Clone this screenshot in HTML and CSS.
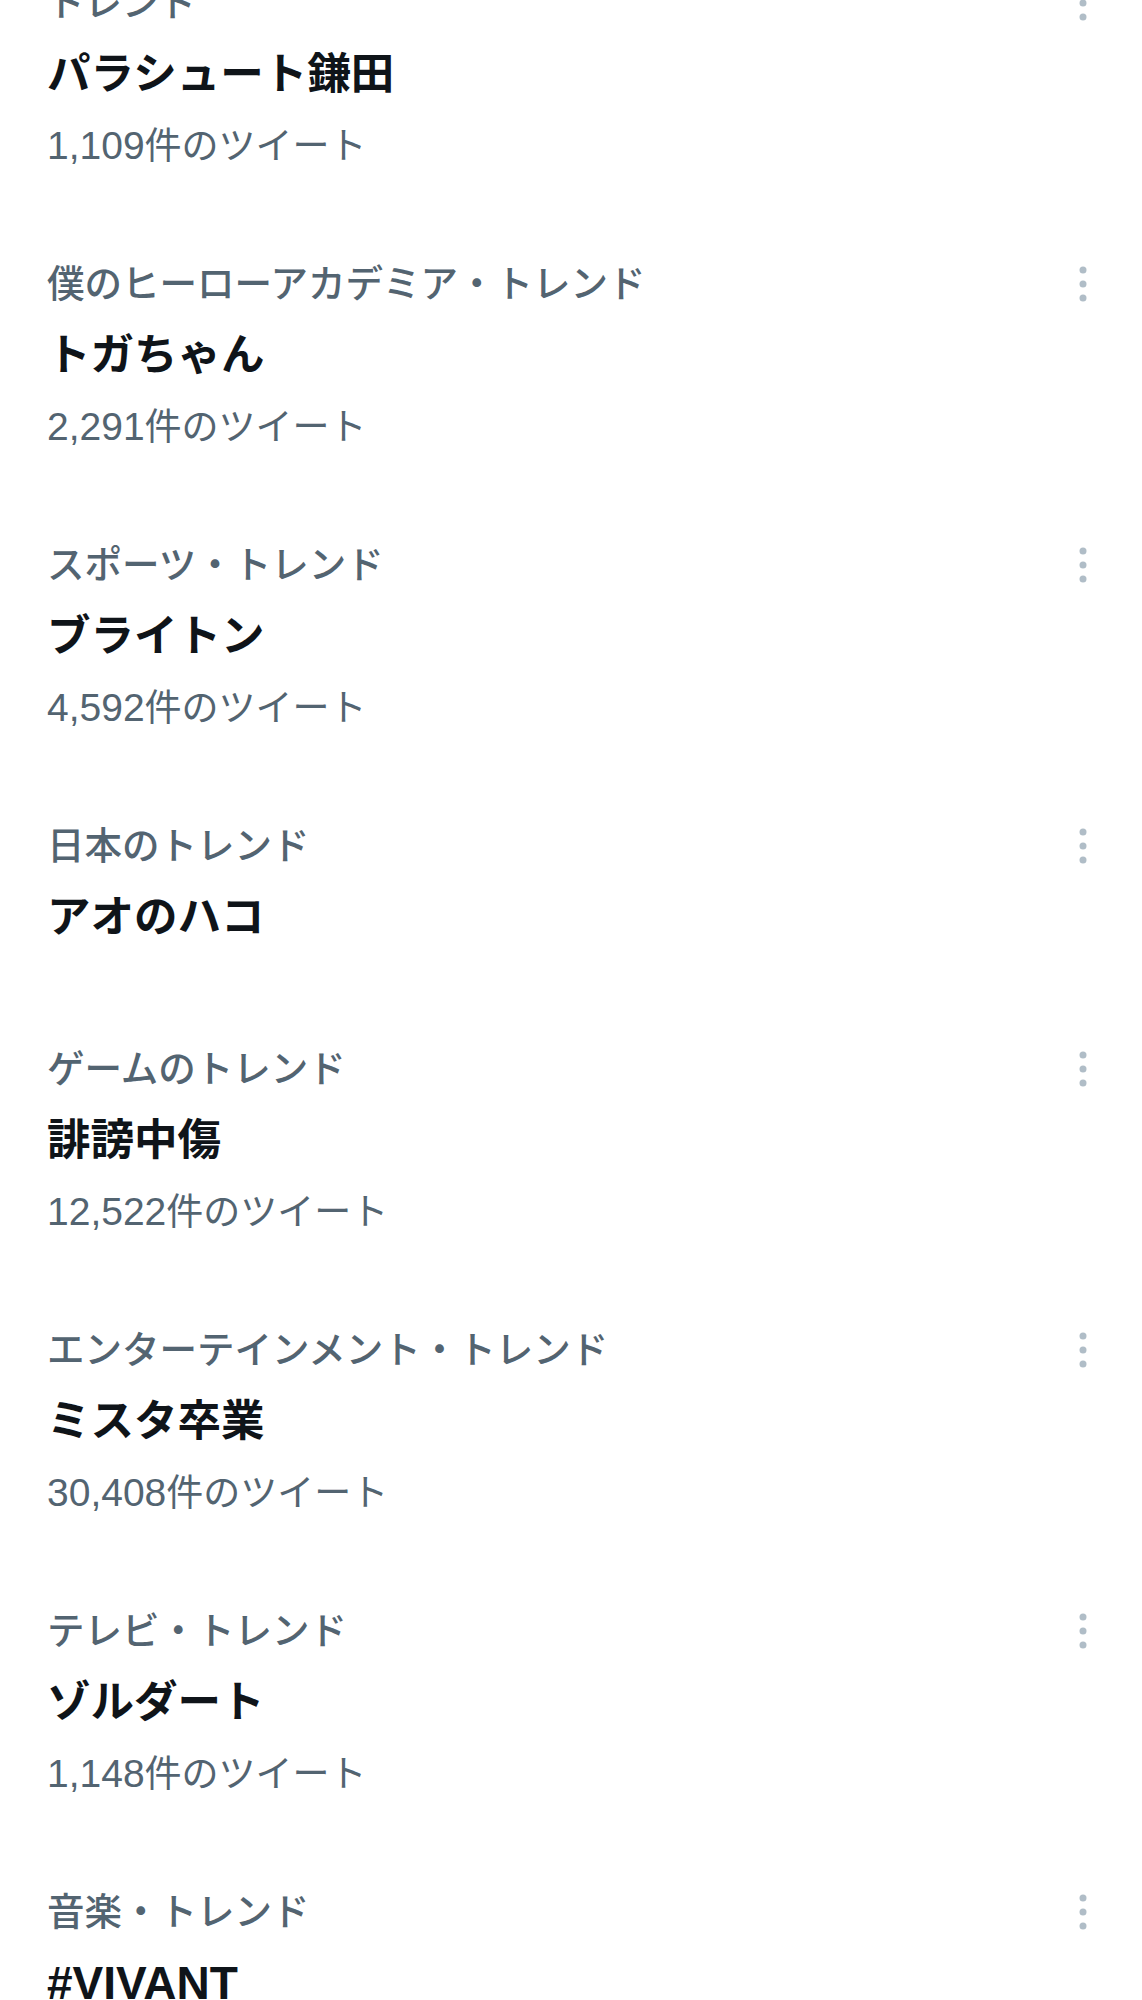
FILE: index.html
```html
<!DOCTYPE html>
<html lang="ja">
<head>
    <meta charset="UTF-8">
    <meta name="viewport" content="width=device-width, initial-scale=1.0">
    <title>トレンド</title>
    <link rel="stylesheet" href="styles.css">
</head>
<body>
    <div class="trends">
        <div class="trend">
            <div class="trend-text">
                <div class="category">トレンド</div>
                <div class="name">パラシュート鎌田</div>
                <div class="count"><span class="num">1,109</span>件のツイート</div>
            </div>
            <button class="more" aria-label="その他">
                <svg width="40" height="48" viewBox="0 0 40 48"><circle cx="20" cy="10" r="3.5"/><circle cx="20" cy="24" r="3.5"/><circle cx="20" cy="38" r="3.5"/></svg>
            </button>
        </div>
        <div class="trend">
            <div class="trend-text">
                <div class="category">僕のヒーローアカデミア・トレンド</div>
                <div class="name">トガちゃん</div>
                <div class="count"><span class="num">2,291</span>件のツイート</div>
            </div>
            <button class="more" aria-label="その他">
                <svg width="40" height="48" viewBox="0 0 40 48"><circle cx="20" cy="10" r="3.5"/><circle cx="20" cy="24" r="3.5"/><circle cx="20" cy="38" r="3.5"/></svg>
            </button>
        </div>
        <div class="trend">
            <div class="trend-text">
                <div class="category">スポーツ・トレンド</div>
                <div class="name">ブライトン</div>
                <div class="count"><span class="num">4,592</span>件のツイート</div>
            </div>
            <button class="more" aria-label="その他">
                <svg width="40" height="48" viewBox="0 0 40 48"><circle cx="20" cy="10" r="3.5"/><circle cx="20" cy="24" r="3.5"/><circle cx="20" cy="38" r="3.5"/></svg>
            </button>
        </div>
        <div class="trend">
            <div class="trend-text">
                <div class="category">日本のトレンド</div>
                <div class="name">アオのハコ</div>
            </div>
            <button class="more" aria-label="その他">
                <svg width="40" height="48" viewBox="0 0 40 48"><circle cx="20" cy="10" r="3.5"/><circle cx="20" cy="24" r="3.5"/><circle cx="20" cy="38" r="3.5"/></svg>
            </button>
        </div>
        <div class="trend">
            <div class="trend-text">
                <div class="category">ゲームのトレンド</div>
                <div class="name">誹謗中傷</div>
                <div class="count"><span class="num">12,522</span>件のツイート</div>
            </div>
            <button class="more" aria-label="その他">
                <svg width="40" height="48" viewBox="0 0 40 48"><circle cx="20" cy="10" r="3.5"/><circle cx="20" cy="24" r="3.5"/><circle cx="20" cy="38" r="3.5"/></svg>
            </button>
        </div>
        <div class="trend">
            <div class="trend-text">
                <div class="category">エンターテインメント・トレンド</div>
                <div class="name">ミスタ卒業</div>
                <div class="count"><span class="num">30,408</span>件のツイート</div>
            </div>
            <button class="more" aria-label="その他">
                <svg width="40" height="48" viewBox="0 0 40 48"><circle cx="20" cy="10" r="3.5"/><circle cx="20" cy="24" r="3.5"/><circle cx="20" cy="38" r="3.5"/></svg>
            </button>
        </div>
        <div class="trend">
            <div class="trend-text">
                <div class="category">テレビ・トレンド</div>
                <div class="name">ゾルダート</div>
                <div class="count"><span class="num">1,148</span>件のツイート</div>
            </div>
            <button class="more" aria-label="その他">
                <svg width="40" height="48" viewBox="0 0 40 48"><circle cx="20" cy="10" r="3.5"/><circle cx="20" cy="24" r="3.5"/><circle cx="20" cy="38" r="3.5"/></svg>
            </button>
        </div>
        <div class="trend">
            <div class="trend-text">
                <div class="category">音楽・トレンド</div>
                <div class="name name-latin">#VIVANT</div>
                <div class="count"><span class="num">2,050</span>件のツイート</div>
            </div>
            <button class="more" aria-label="その他">
                <svg width="40" height="48" viewBox="0 0 40 48"><circle cx="20" cy="10" r="3.5"/><circle cx="20" cy="24" r="3.5"/><circle cx="20" cy="38" r="3.5"/></svg>
            </button>
        </div>
    </div>
</body>
</html>
```

FILE: styles.css
```css
body {
    margin: 0;
    background-color: #ffffff;
    font-family: "Liberation Sans", "Noto Sans CJK JP", sans-serif;
    overflow: hidden;
}
.trends {
    margin-top: -68px;
}
.trend {
    display: flex;
    justify-content: space-between;
    align-items: flex-start;
    padding: 47px 39px 47px 47px;
}
.category {
    color: #536471;
    font-size: 37.5px;
    line-height: 48px;
    height: 48px;
    font-weight: 500;
}
.name {
    color: #0f1419;
    font-size: 43.5px;
    line-height: 68px;
    height: 68px;
    font-weight: 600;
    margin-top: 13px;
}
.name-latin {
    font-size: 46px;
}
.count {
    color: #536471;
    font-size: 37px;
    line-height: 40px;
    height: 40px;
    margin-top: 18px;
}
.count .num {
    font-size: 39px;
}
.more {
    background: none;
    border: none;
    padding: 0;
    width: 40px;
    height: 48px;
    cursor: pointer;
}
.more svg {
    display: block;
    fill: #b0bdc7;
}
```
